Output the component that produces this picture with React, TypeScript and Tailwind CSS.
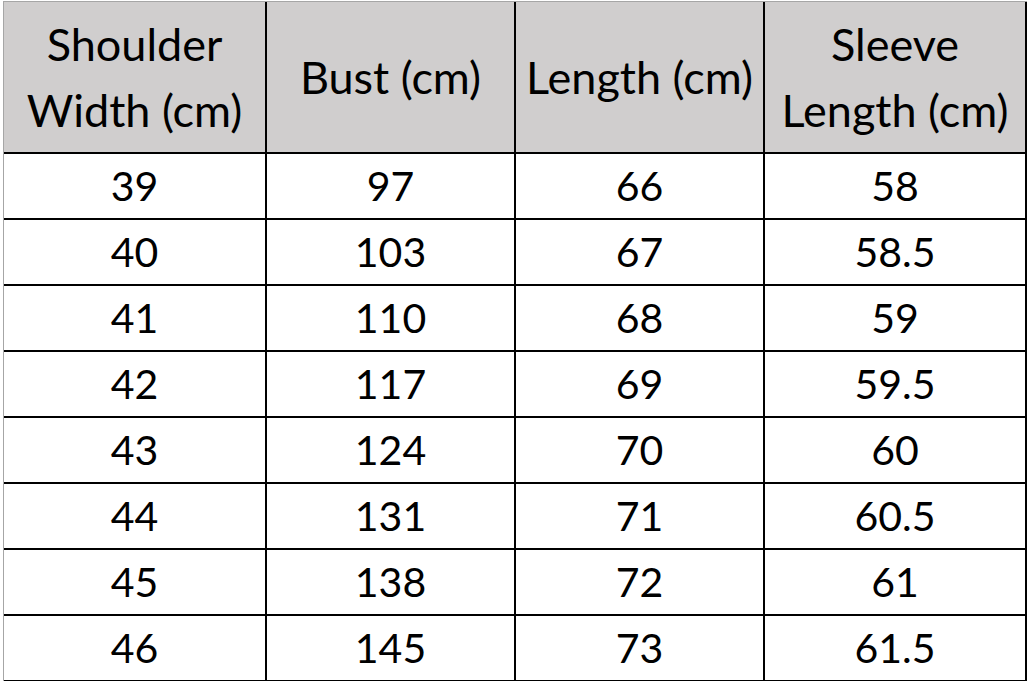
const HEADERS = [
  ["Shoulder", "Width (cm)"],
  ["Bust (cm)"],
  ["Length (cm)"],
  ["Sleeve", "Length (cm)"],
];

const ROWS = [
  ["39", "97", "66", "58"],
  ["40", "103", "67", "58.5"],
  ["41", "110", "68", "59"],
  ["42", "117", "69", "59.5"],
  ["43", "124", "70", "60"],
  ["44", "131", "71", "60.5"],
  ["45", "138", "72", "61"],
  ["46", "145", "73", "61.5"],
];

export default function App() {
  return (
    <div className="w-[1028px] h-[681px] overflow-hidden bg-white pl-[3px] pt-[1px] font-['Lato','Liberation_Sans',sans-serif] text-black">
      <div className="w-[1024px] border-l border-t border-[#a6a6a6]">
        <div className="grid grid-cols-[261px_247px_247px_260px] gap-[2px] bg-black border-r-2 border-b-2 border-black">
          {HEADERS.map((lines, i) => (
            <div
              key={i}
              className="h-[150px] bg-[#d0cece] flex flex-col items-center justify-center text-[45px] leading-[66px]"
            >
              {lines.map((l) => (
                <span key={l}>{l}</span>
              ))}
            </div>
          ))}
          {ROWS.map((row, r) =>
            row.map((v, c) => (
              <div
                key={r + "-" + c}
                className="h-[64px] bg-white flex items-center justify-center text-[41px]"
              >
                {v}
              </div>
            ))
          )}
        </div>
      </div>
    </div>
  );
}
